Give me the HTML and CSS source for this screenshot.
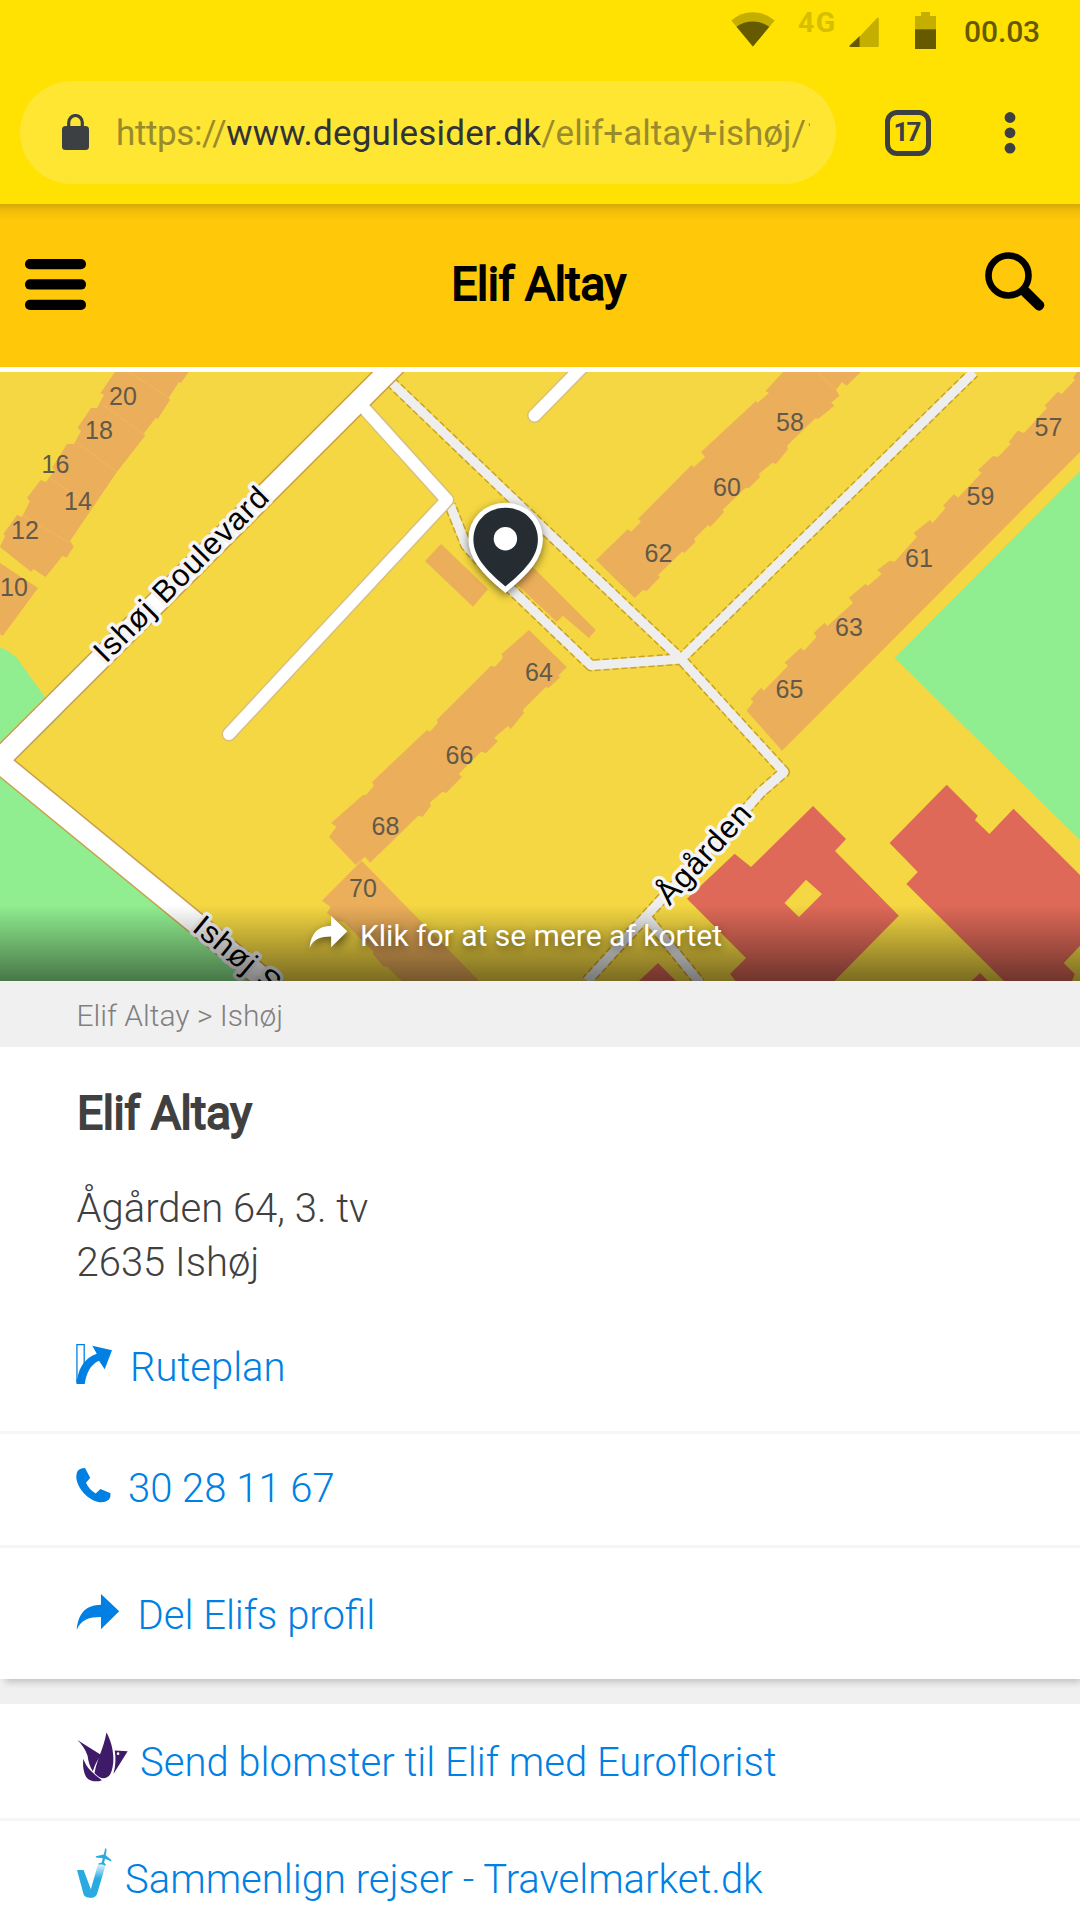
FILE: index.html
```
<!DOCTYPE html>
<html lang="da">
<head>
<meta charset="utf-8">
<title>Elif Altay</title>
<link rel="stylesheet" href="styles.css">
</head>
<body>
<div class="browser">
  <div class="status">
    <svg class="wifi" width="44" height="35" viewBox="730.5 12.5 44 35"><path fill="#c4ae00" d="M752.4 47 730.9 21Q740 12.7 752.4 12.7T774.2 21Z"/><path fill="#665a00" d="M752.4 47 736 27.3Q743 22 752.4 22T768.8 27.3Z"/></svg>
    <span class="net">4G</span>
    <svg class="signal" width="30" height="30" viewBox="0 0 30 30"><path fill="#c4ae00" d="M10.6 30V19.4L28 1Q29.8 0 29.8 2V28.500Q29.800 30 28 30Z"/><path fill="#665a00" d="M10.700 30V19L.7 28.500Q0 30 1.500 30Z"/></svg>
    <svg class="battery" width="21" height="37" viewBox="0 0 21 37"><path fill="#c4ae00" d="M6 0H15V4H21V18H0V4H6Z"/><path fill="#665a00" d="M0 17.300H21V37H0Z"/></svg>
    <span class="clock">00.03</span>
  </div>
  <div class="toolbar">
    <div class="pill">
      <svg class="lock" width="27" height="36" viewBox="0 0 27 36"><rect x="0" y="12" width="27" height="24" rx="3.500" fill="#3c4043"/><path d="M6.700 13V8.500a6.800 7 0 0 1 13.600 0V13" fill="none" stroke="#3c4043" stroke-width="3.200"/></svg>
      <div class="url"><span class="scheme">https://</span><b>www.degulesider.dk</b>/elif+altay+ishøj/1</div>
    </div>
    <div class="tabs">17</div>
    <svg class="dots" width="12" height="42" viewBox="0 0 12 42" fill="#3c4043"><circle cx="6" cy="5.500" r="5.400"/><circle cx="6" cy="20.800" r="5.400"/><circle cx="6" cy="36.200" r="5.400"/></svg>
  </div>
</div>

<header class="header">
  <svg class="menu" width="61" height="51" viewBox="0 0 61 51"><rect width="61" height="10.300" rx="5"/><rect y="20.300" width="61" height="10.300" rx="5"/><rect y="40.700" width="61" height="10.300" rx="5"/></svg>
  <h1 class="brand">Elif Altay</h1>
  <svg class="search" width="60" height="59" viewBox="0 0 60 59"><circle cx="23.500" cy="23.500" r="20" fill="none" stroke="#000" stroke-width="6.600"/><path d="M34 40 40 34 44 36 58.500 50.500Q60.500 54 57.500 57T51 57.500L37 44Z"/></svg>
</header>

<section class="map">
  <svg class="map-art" width="1080" height="609" viewBox="0 372 1080 609">
    <rect y="372" width="1080" height="609" fill="#f4d742"/>
    <g fill="#90ee90">
      <path d="M0 647.500 8 651 17 658 29 675 45 697 61 716 14 761 290 1000H0Z"/>
      <path d="M894.700 658 1080 471V840Z"/>
    </g>
    <g fill="#ebae5a">
      <path d="M115 372 100.500 393 104 395 97 408 91 408 77.500 428 81 431 74 444 67 444 52 468 55 470 46 482 40.600 480 27 498 30 501 22 517 17 515 3.400 534 5 536 0 547 31 571.700 33.400 569 45.500 577 62.700 555.700 66.500 557.700 73.700 546.700 70 541 117 471.700 145 436 143.500 434 155.600 418 157.700 419 170 400 168.700 397.700 179 382 181 383 188.700 372Z"/>
      <path d="M0 563 38 588 2.800 635.700 0 634Z"/>
      <path d="M783 372 765.500 391 769 393 757.600 402.700 756 401 701 452 705 457 694 467 691.500 465 638 519 641 521.700 631 531.700 628 529 596 560 634.700 598 643 590 646.700 591 660 577 658 575 682 551.700 684.600 552.700 695.600 541.700 694 539 708 525 710.500 526.700 724 512 722.500 510 745.600 487.700 749 488 760 477 758.700 474 772.400 462.700 776 464 788 449 787 445.700 815.500 418 818 419 834.400 405.700 831 402.700 839.600 395.700 836 390 842 382 846.500 385.700 861 372Z"/>
      <path d="M1077 372 1073 377.700 1075 380 1061.700 394 1058 391.700 1044.500 405.700 1047 408 1024 433 1017.600 430.700 1009 441.700 1010.700 444 998 457 993 456 978 470 981.500 473 958 497.700 954 494 943 505.700 945.600 508 932.600 523 930 520 913.600 533 917 536.700 894.700 561.700 889.500 560.700 877.500 570 881.600 574 868 586 865.400 584 849 597.700 853 603 827.500 626 824.400 622.700 813.800 633 816.500 637 804 650.700 800.700 648 784.500 662.700 788 665.700 763.800 690.700 761 687.700 750.700 699 753.500 701.700 746.600 710.700 782 750.700 1080 452V372Z"/>
      <path d="M529 630 501.700 654 502.700 658 495 666.700 491 665.700 436.600 720 438 722.700 430 731.700 427 730 372 782 374 785.700 366 795 363 795 331 823 336.400 826.700 329 836.700 355.700 865 365 856.700 370 862.700 418.400 815.700 422.500 816.700 431 805.700 429.800 802.700 442.500 791.700 446 793 462 777 458.700 774 481 751.700 486 753 498 741 494 738 508 726 510.700 729 524 713 522.700 710 546 687 548.600 688 560.700 676.700 558 676 566.700 667Z"/>
      <path d="M361.600 860.700 322 900.700 330.600 907 327 913 336 921 344 922 373.600 951.700 373 954 384 967 386 966 403 982H480Z"/>
      <path d="M441 544 488 589 473 606.700 425 561Z"/>
      <path d="M520 555 531.700 566 595.700 630 589 638 563 615.700 556.700 621.700 510 578Z"/>
    </g>
    <path d="M129 372 169 398M103 405 145 435M76 442 117 472M49 477 78 498M22 515 70 543M817 372 836 390" stroke="#f0bb55" fill="none"/>
    <g fill="#df6958">
      <path fill-rule="evenodd" d="M813 806 846 839 835 851 898.800 915.700 834.400 981H735.600L730 974 746 958 687 898.700 734.600 853.700 751 867ZM806 879.700 822 894 799 917 784.500 903Z"/>
      <path d="M946.700 784.700 977.700 815.700 975 820 989.400 834 1013.500 808.700 1080 875V945.700L1063.800 963 1074.800 974 1072 981H1004L906.400 884 917.800 872 889.500 843Z"/>
      <path d="M658 963 639 981H676ZM980 973 971.500 981H988Z"/>
    </g>
    <g fill="none" stroke-linejoin="round">
      <path stroke="#c7a22c" stroke-width="12" stroke-dasharray="6 3" d="M385 375 392 383 540 525 681 659 784 772 761 792 747 808 660 901 587 981M648 919 700 983M681 659 591 665.500 512 590 480 561 466 545 450 505M681 659 974 372"/>
      <path stroke="#eee" stroke-width="9" d="M385 375 392 383 540 525 681 659 784 772 761 792 747 808 660 901 587 981M648 919 700 983M681 659 591 665.500 512 590 480 561 466 545 450 505M681 659 974 372"/>
      <path stroke="#d8c07c" stroke-width="15" stroke-linecap="round" d="M365 409 447 500 229 734M534.500 415.500 590 359"/>
      <path stroke="#c99f4c" stroke-width="23.500" stroke-linejoin="miter" d="M420 340-2 761 300 1008.500"/>
      <path stroke="#fff" stroke-width="12" stroke-linecap="round" d="M362 406 447 500 229 734M534.500 415.500 590 359"/>
      <path stroke="#fff" stroke-width="20.500" stroke-linejoin="miter" d="M420 340-2 761 300 1008.500"/>
    </g>
    <g class="house">
      <text x="123" y="405">20</text><text x="99" y="439">18</text><text x="55.500" y="473">16</text><text x="78" y="510">14</text><text x="25" y="538.500">12</text><text x="14" y="595.500">10</text>
      <text x="790" y="430.500">58</text><text x="727" y="496">60</text><text x="658.500" y="561.500">62</text>
      <text x="1048.500" y="436">57</text><text x="980.500" y="504.500">59</text><text x="919" y="567">61</text><text x="849" y="635.500">63</text><text x="789.500" y="698">65</text>
      <text x="539" y="680.500">64</text><text x="459.500" y="763.500">66</text><text x="385.500" y="834.500">68</text><text x="363" y="897">70</text>
    </g>
    <g class="street">
      <text transform="translate(106 664) rotate(-45)" textLength="234">Ishøj Boulevard</text>
      <text transform="translate(669.500 906.500) rotate(-47.500)" textLength="125">Ågården</text>
      <text transform="translate(191 930) rotate(39.400)">Ishøj S</text>
    </g>
    <g class="pin">
      <path fill="#252d33" stroke="#fff" stroke-width="10" paint-order="stroke" stroke-linejoin="miter" d="M505.400 507.700C487 507.700 473.400 521.500 473.400 539.500 473.400 557 487 571 505.400 586.500 524 571 537.900 557 537.900 539.500 537.900 521.500 524 507.700 505.400 507.700Z"/>
      <circle cx="505.400" cy="538.700" r="11.700" fill="#fff"/>
    </g>
  </svg>
  <div class="caption">
    <svg width="39" height="32" viewBox="0 0 44 36.500" fill="#fff"><path d="M.4 36.500C2 19 10 11.500 25 11V0L43.500 17.500 25 35.700V23.300C13 23.500 5 25.500.4 36.500Z"/></svg>
    <span>Klik for at se mere af kortet</span>
  </div>
</section>

<nav class="crumbs">Elif Altay &gt; Ishøj</nav>

<main class="card">
  <h2 class="name">Elif Altay</h2>
  <address class="address">Ågården 64, 3. tv<br>2635 Ishøj</address>
  <a class="row route">
    <svg width="36" height="40" viewBox="0 0 36 40"><path fill="none" stroke="#0080e3" stroke-width="1.300" d="M.9.7H8.200V20L1 38Z"/><path fill="#0080e3" d="M.4 40H8.700C10.500 28.500 14.500 20.500 23 16.700L28.700 25.300 36 6.300 16.300 1.700 20.800 9.700C9 13.500 3 24 1.500 34L.4 36Z"/></svg>
    <span>Ruteplan</span>
  </a>
  <a class="row phone">
    <svg width="35" height="35" viewBox="0 0 35 35" fill="#0080e3"><path d="M2.300 2.200Q4 .4 9 0L14.200 9.800 10 14.700Q13 21.500 19.700 25.500L24.500 21 34.500 25.200Q35 29 32.800 31.800 28.500 34.800 23.500 34.200C12 32.500 1 20 .3 9.500Q.2 4.500 2.300 2.200Z"/></svg>
    <span>30 28 11 67</span>
  </a>
  <a class="row share">
    <svg width="44" height="36" viewBox="0 0 44 36.500" fill="#0080e3"><path d="M.4 36.500C2 19 10 11.500 25 11V0L43.500 17.500 25 35.700V23.300C13 23.500 5 25.500.4 36.500Z"/></svg>
    <span>Del Elifs profil</span>
  </a>
</main>

<section class="ads">
  <a class="row flowers">
    <svg width="51" height="50" viewBox="231 276 154 150" fill="#3f1a68"><path d="M232 300 304 345Q286 368 279 394 266 375 263 347 252 318 232 300Z"/><path d="M320 277C310 330 292 355 284 399 296 414 316 424 331 404 348 370 342 316 320 277Z"/><path d="M250 356C260 385 280 400 306 421 290 428 262 426 255 404 248 385 249 370 250 356Z"/><path d="M345 331 384 334 341 402Q351 366 345 331Z"/><circle cx="355" cy="341" r="4" fill="#fff"/></svg>
    <span>Send blomster til Elif med Euroflorist</span>
  </a>
  <a class="row travel">
    <svg width="35" height="50" viewBox="231 624 106 150"><defs><linearGradient id="trail" x1="0" y1="670" x2="0" y2="716" gradientUnits="userSpaceOnUse"><stop offset="0" stop-color="#29abe2" stop-opacity=".1"/><stop offset="1" stop-color="#29abe2"/></linearGradient></defs><path fill="#29abe2" d="M231 690H251L273 748 282 766Q281 774 271 774 256 774 251 764Z"/><path fill="url(#trail)" d="M295 671 317 677 292 762Q288 774 273 774L267 766 273 748Z"/><path fill="#29abe2" d="M318 624Q322 626 320 633L318 645 335 660V664L316 656 313 667 318 673V677L307 673 296 673V670L306 667 309 654 288 652V648L312 643 315 631Q315 625 318 624Z"/></svg>
    <span>Sammenlign rejser - Travelmarket.dk</span>
  </a>
</section>
</body>
</html>
```

FILE: styles.css
```
* { box-sizing: border-box; }
body {
  margin: 0;
  width: 1080px;
  height: 1920px;
  overflow: hidden;
  background: #f0f0f0;
  font-family: Roboto, "Liberation Sans", sans-serif;
  color: #404040;
}
svg { display: block; flex: none; }

.browser { height: 204px; background: #ffe102; }
.status { display: flex; align-items: flex-start; height: 81px; padding: 0 0 0 731px; }
.status .wifi { margin-top: 12px; }
.net { width: 37px; margin: 6px 0 0 23px; font-size: 28.500px; line-height: 33px; font-weight: 700; letter-spacing: 1.500px; color: #d6be00; }
.signal { margin: 17px 0 0 14px; }
.battery { margin: 12px 0 0 36px; }
.clock { margin: 14px 0 0 28px; font-size: 30px; line-height: 36px; font-weight: 500; letter-spacing: -.1px; color: #665a00; }
.toolbar { display: flex; align-items: center; height: 103px; padding-left: 20px; }
.pill { display: flex; align-items: center; width: 816px; height: 103px; padding-left: 42px; border-radius: 52px; background: #ffe633; }
.lock { margin-bottom: 1px; }
.url { width: 694px; margin-left: 27px; overflow: hidden; white-space: nowrap; font-size: 35px; line-height: 50px; padding-top: 3px; color: #998a2e; }
.scheme { letter-spacing: -.4px; }
.url b { font-weight: 400; letter-spacing: .18px; color: #303438; }
.tabs { width: 46px; height: 46px; margin-left: 49px; border: 5px solid #3c4043; border-radius: 12px; font-size: 26px; font-weight: 700; line-height: 35px; letter-spacing: -2px; text-indent: -3px; text-align: center; color: #3c4043; }
.dots { margin-left: 72.500px; }

.header {
  display: flex;
  align-items: center;
  justify-content: space-between;
  height: 163px;
  padding: 0 35px 0 25px;
  background: linear-gradient(rgba(0, 0, 0, .16), rgba(0, 0, 0, .05) 7px, transparent 17px) #ffc808;
}
.menu { margin-bottom: 2px; }
.search { margin-bottom: 9px; }
.brand, .name { margin: 0; font-size: 46px; font-weight: 400; line-height: 60px; letter-spacing: -.4px; -webkit-text-stroke: 1.800px currentColor; }
.brand { margin: 0 0 3px 6px; color: #000; }

.map { position: relative; height: 614px; border-top: 5px solid #fff; }
.house { font: 25px "Liberation Sans", sans-serif; fill: #625a48; text-anchor: middle; }
.street { font: 31px "Liberation Sans", sans-serif; letter-spacing: 1px; fill: #000; stroke: #f4f4f4; stroke-width: 7px; stroke-linejoin: round; paint-order: stroke; }
.pin { filter: drop-shadow(0 3px 4px rgba(0, 0, 0, .5)); }
.caption {
  position: absolute;
  left: 0;
  right: 0;
  bottom: 0;
  display: flex;
  gap: 12px;
  height: 76px;
  padding: 11px 0 0 309px;
  font-size: 30px;
  line-height: 40px;
  color: #fff;
  background: linear-gradient(transparent, rgba(0, 0, 0, .5));
}
.caption span { text-shadow: 0 3px 8px rgba(0, 0, 0, .5); }
.caption svg { filter: drop-shadow(2px 3px 4px rgba(0, 0, 0, .5)); }

.crumbs { height: 66px; padding-left: 76.500px; font-size: 30px; line-height: 70px; font-weight: 300; color: #808080; }
.card { position: relative; height: 632px; padding-top: 36px; background: #fff; box-shadow: 3px 5px 7px -2px rgba(0, 0, 0, .2); }
.name { padding-left: 77px; }
.address { margin-top: 39px; margin-bottom: -1px; padding-left: 76.500px; font-size: 40px; font-style: normal; font-weight: 300; line-height: 54px; }
.row { display: flex; align-items: center; padding-left: 76px; font-size: 40px; font-weight: 300; color: #0080e3; white-space: nowrap; }
.row svg { margin-bottom: 7px; }
.route { height: 142px; padding-top: 14px; }
.route span { margin-left: 18px; }
.phone { height: 117px; padding-bottom: 2px; border-top: 3px solid #f6f6f6; border-bottom: 3px solid #f6f6f6; }
.phone span { margin-left: 17px; }
.share { height: 131px; padding-top: 4px; }
.share span { margin-left: 17.500px; }
.ads { margin-top: 25px; background: #fff; }
.flowers { height: 117px; padding-top: 3px; border-bottom: 3px solid #f6f6f6; }
.flowers svg { margin: 0 0 11px 1px; }
.flowers span { margin-left: 12px; }
.travel { height: 116px; }
.travel svg { margin: 0 0 12px 1px; }
.travel span { margin-left: 13px; }
```
